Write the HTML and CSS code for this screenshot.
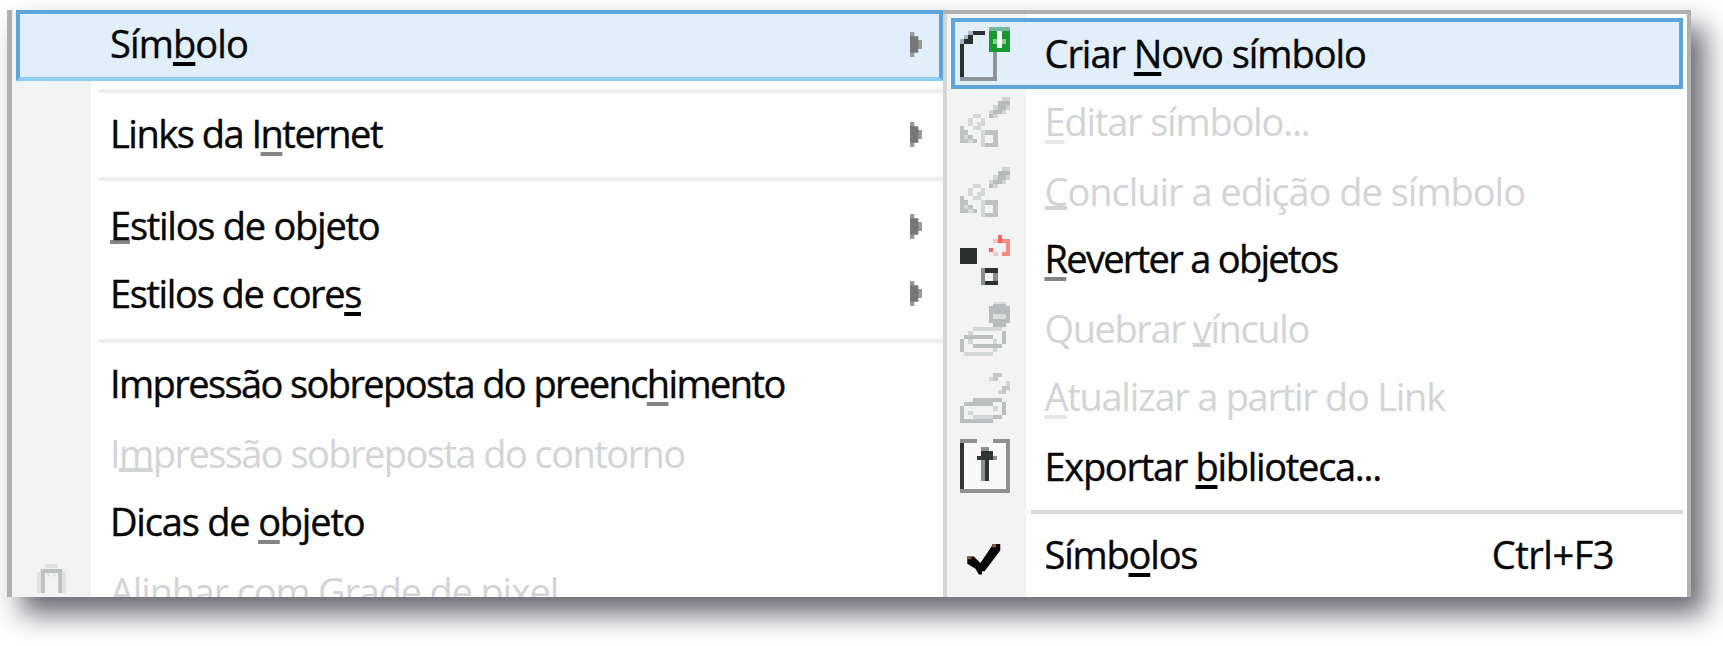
FILE: index.html
```html
<!DOCTYPE html>
<html lang="pt-BR">
<head>
<meta charset="utf-8">
<title>Menu Objeto</title>
<link rel="stylesheet" href="styles.css">
</head>
<body>
<svg width="0" height="0" class="defs">
  <symbol id="arrow" viewBox="0 0 3 6"><path d="M0 0H1V1H2V2H3V4H2V5H1V6H0Z" fill="#777"/><path d="M0 0H1V1H0ZM0 5H1V6H0ZM2 2H3V4H2Z" fill="#999"/></symbol>
  <symbol id="edit" viewBox="0 0 12 12">
    <path d="M10 1H12V2H11V3H10V4H8V3H8V2H9V1H10ZM7 4H8V5H7Z" fill="#b8bbbb"/>
    <path d="M10 0H12V1H10ZM11 2H12V3H11ZM10 3H11V4H10ZM8 2H9V3H8ZM7 3H8V4H7ZM8 4H9V5H8Z" fill="#d2d4d4"/>
    <path d="M3 4H5V5H3ZM2 5H3V7H2ZM5 5H6V7H5ZM3 7H5V8H3ZM4 6H5V7H4ZM1 9H2V10H1ZM2 10H3V11H2ZM5 8H6V12H5Z" fill="#d5d8d8"/>
    <path d="M0 7H1V11H0ZM1 8H2V9H1ZM2 9H3V10H2ZM3 10H4V11H3ZM1 10H2V11H1ZM6 8H9V12H6V11H8V9H6Z" fill="#bfc2c2"/>
  </symbol>
</svg>
<main class="frame">
  <section class="menu main-menu">
    <div class="item active r1"><span class="t s1">Sím<u class="k">b</u>olo</span><svg class="sub"><use href="#arrow"/></svg></div>
    <hr class="sep sep1">
    <div class="item r2"><span class="t s2">Links da I<u>n</u>ternet</span><svg class="sub"><use href="#arrow"/></svg></div>
    <hr class="sep sep2">
    <div class="item r3"><span class="t s3"><u class="near">E</u>stilos de objeto</span><svg class="sub"><use href="#arrow"/></svg></div>
    <div class="item r4"><span class="t s4">Estilos de core<u class="k">s</u></span><svg class="sub"><use href="#arrow"/></svg></div>
    <hr class="sep sep3">
    <div class="item r5"><span class="t s5">Impressão sobreposta do preenc<u>h</u>imento</span></div>
    <div class="item off r6"><span class="t s6">I<u class="near">m</u>pressão sobreposta do contorno</span></div>
    <div class="item r7"><span class="t s7">Dicas de <u>o</u>bjeto</span></div>
    <div class="item off r8">
      <svg class="magnet" viewBox="0 0 7 7"><path d="M1.400 7V1.700H5.600V7" fill="none" stroke="#bdc0c0" stroke-width="1"/><path d="M2 0H5V1H2ZM0 2H1V7H0ZM6 2H7V7H6ZM2.500 2.200H3V3H2.500ZM4 2.200H4.500V3H4Z" fill="#dfe1e1"/></svg>
      <span class="t s8"><u class="near">A</u>linhar com Grade de pixel</span>
    </div>
  </section>
  <section class="menu sub-menu">
    <div class="item active q1">
      <svg class="ico h13" viewBox="0 0 12 13"><path d="M3 1H6V2H3ZM2 2H3V3H2ZM1 3H3V4H1ZM0 4H1V12H0Z" fill="#2b312f"/><path d="M2 1H3V2H2ZM1 2H2V3H1ZM0 3H1V4H0Z" fill="#a9b5bc"/><path d="M0 12H8V6H9V13H0Z" fill="#8c9399"/><path d="M7 0H12V1H7Z" fill="#70b896"/><path d="M7 1H12V6H7Z" fill="#179a2d"/><path d="M9 1H10V5H9Z" fill="#fff"/><path d="M8 3H9V4H8ZM10 3H11V4H10Z" fill="#8acb96"/></svg>
      <span class="t p1">Criar <u class="k">N</u>ovo símbolo</span>
    </div>
    <div class="item off q2"><svg class="ico h12"><use href="#edit"/></svg><span class="t p2"><u class="low">E</u>ditar símbolo...</span></div>
    <div class="item off q3"><svg class="ico h12"><use href="#edit"/></svg><span class="t p3"><u class="near">C</u>oncluir a edição de símbolo</span></div>
    <div class="item q4">
      <svg class="ico h12" viewBox="0 0 12 12"><path d="M0 3H4V7H0Z" fill="#2b312f"/><path d="M6 8H9V9H6ZM6 11H9V12H6Z" fill="#2b312f"/><path d="M5 8H6V12H5ZM8 9H9V11H8Z" fill="#8b8e8e"/><path d="M9 0H10V2H9ZM7 3H8V4H7Z" fill="#f2655b"/><path d="M10 1H12V5H10V4H11V2H10Z" fill="#f58a83"/><path d="M8 1H9V2H8ZM8 4H9V5H8Z" fill="#f9c3bf"/></svg>
      <span class="t p4"><u>R</u>everter a objetos</span>
    </div>
    <div class="item off q5">
      <svg class="ico h13" viewBox="0 0 12 13"><path d="M8 0H11V1H12V5H11V6H8V5H7V1H8Z" fill="#b9bcbc"/><path d="M8 3H11V4H8ZM8 0H11V.5H8Z" fill="#dcdede"/><path d="M3 6H10V7H3ZM2 7H3V8H2ZM2 9H3V10H2ZM8 9H9V10H8ZM1 12H8V13H1ZM8 11H9V12H8Z" fill="#d4d7d7"/><path d="M1 8H8V9H1ZM0 9H1V12H0ZM3 10H10V11H3ZM10 7H11V10H10Z" fill="#bcbfbf"/></svg>
      <span class="t p5">Quebrar <u class="near">v</u>ínculo</span>
    </div>
    <div class="item off q6">
      <svg class="ico h12" viewBox="0 0 12 12"><path d="M8 0H10V1H9V2H8ZM10 3H12V4H11V5H10Z" fill="#c5c8c8"/><path d="M7 1H8V2H7ZM11 2H12V3H11ZM9 4H10V5H9ZM2 9H3V10H2ZM3 10H9V11H3ZM8 8H9V9H8ZM2 7H3V8H2Z" fill="#d4d7d7"/><path d="M3 6H10V7H3ZM1 7H8V8H1ZM0 8H1V11H0ZM0 11H8V12H0ZM10 7H11V10H10ZM8 10H10V11H8Z" fill="#bcbfbf"/></svg>
      <span class="t p6"><u class="low">A</u>tualizar a partir do Link</span>
    </div>
    <div class="item q7">
      <svg class="ico h13" viewBox="0 0 12 13"><path d="M1 1H11V12H1Z" fill="#f9f9f9"/><path d="M0 0H4V1H0ZM8 0H12V13H0V12H11V1H8Z" fill="#909292"/><path d="M0 1H1V12H0ZM5 3H8V4H8V5H7V10H6V5H4V4H5Z" fill="#2f3533"/><path d="M5 5H6V10H5ZM5 2H7V3H5ZM8 4H9V5H8Z" fill="#8c8f8f"/></svg>
      <span class="t p7">Exportar <u class="k">b</u>iblioteca...</span>
    </div>
    <hr class="sep sep4">
    <div class="item q8">
      <svg class="check" viewBox="0 0 10 8"><path d="M1 3H2.600L4.200 4.600L7 .4V0H9V1.600L5.200 6.600H4.600V7.400H3.800L3 6L1 4.800Z" fill="#080808"/><path d="M1 3H2V3.700H1ZM7 0H8V.8H7Z" fill="#8c5a3a"/></svg>
      <span class="t p8">Símb<u class="k">o</u>los</span><span class="key">Ctrl+F3</span>
    </div>
  </section>
</main>
</body>
</html>
```
FILE: styles.css
```css
* { box-sizing: border-box; }
body {
  margin: 0;
  height: 646px;
  overflow: hidden;
  padding: 10px 0 0 7px;
  background: #fff;
  color: #080808;
  font: 38px/1 "Open Sans", "Noto Sans", sans-serif;
}
.defs { position: absolute; }
.frame {
  display: flex;
  width: 1684px;
  height: 587px;
  box-shadow: 14px 17px 26px rgba(36, 32, 44, .68);
  background: #fff;
}
.menu {
  display: flex;
  flex-direction: column;
  height: 587px;
  overflow: hidden;
}
.main-menu {
  width: 936px;
  border-left: 5px solid #b0b0b0;
  background: linear-gradient(90deg, #f3f3f3 79px, #fefefe 79px);
}
.sub-menu {
  width: 748px;
  border: solid #b0b1b1;
  border-width: 4px 4px 0 0;
  background: linear-gradient(90deg, #d4d6d6 4px, #f3f3f3 4px, #f3f3f3 83px, #fefefe 83px);
}
.item {
  display: flex;
  flex: none;
  align-items: center;
  position: relative;
  padding-top: 2px;
  -webkit-text-stroke: .4px;
}
.main-menu .item { padding-left: 98px; }
.sub-menu .item { padding-left: 12px; }
.t { white-space: pre; line-height: 60px; }
.sub-menu .t { margin-left: 35px; }
.sub-menu .off, .main-menu .off { color: #d4d4d7; -webkit-text-stroke: 0; }
.main-menu .active {
  margin-left: 4px;
  padding: 0 0 6px 90px;
  border: 4px solid #5ba5da;
  border-bottom-color: #8dcdf1;
  background: #e2effa;
}
.sub-menu .active {
  margin: 4px 4px 0 8px;
  padding: 0 0 2px 5px;
  border: 4px solid #5ba5da;
  background: #e2effa;
}
u {
  text-decoration: underline 4px #858585;
  text-underline-offset: 4px;
  text-decoration-skip-ink: none;
}
.near { text-underline-offset: 0; }
.k { text-decoration-color: #000; }
.off u { text-decoration-color: #d2d3d3; }
.off .low { text-decoration-color: #e8e8e8; }
.sep { flex: none; height: 4px; margin: 0 0 0 87px; border: 0; background: #eee; }

.r1 { height: 71px; }
.sep1 { margin-top: 8px; }
.main-menu .r2 { height: 79px; padding-top: 0; }
.sep2 { margin-top: 5px; }
.r3 { height: 67px; margin-top: 9px; }
.main-menu .r4 { height: 66px; padding-top: 5px; }
.sep3 { margin-top: 16px; }
.r5 { height: 68px; margin-top: 5px; }
.r6 { height: 72px; }
.r7 { height: 63px; }
.r8 { height: 77px; }

.q1 { height: 71px; }
.q2 { height: 61px; }
.q3 { height: 71px; margin-top: 5px; }
.q4 { height: 61px; }
.q5 { height: 67px; margin-top: 7px; }
.q6 { height: 67px; }
.q7 { height: 67px; margin-top: 3px; }
.sep4 { margin: 12px 4px 0 88px; background: #d6d9d9; }
.q8 { height: 67px; margin-top: 5px; }
.sub-menu .q3, .sub-menu .q5 { padding-top: 0; }

.sub { width: 12.5px; height: 25px; margin: 4px 21px 0 auto; }
.r4 .sub { margin-top: 2px; }
.main-menu .active .sub { margin-right: 17px; }
.ico { flex: none; width: 50px; margin-left: 4.5px; shape-rendering: crispEdges; }
.h12 { height: 50px; }
.h13 { height: 54px; }
.q1 .ico { margin: 2px 0 0 -.5px; }
.q2 .ico { margin-top: 2px; }
.q3 .ico { margin-top: 2px; }
.q4 .ico, .q6 .ico { margin-top: 4px; }
.q5 .ico { margin-top: 2px; }
.magnet { width: 29px; height: 29px; margin: -24px 45px 0 -73px; }
.r8 .t { margin-left: -1px; }
.check { width: 41.5px; height: 33px; margin: 14px 5px 0 8px; }
.key { margin-left: auto; margin-right: 73px; letter-spacing: -.5px; }

.s1 { letter-spacing: -.9px; }
.s2 { letter-spacing: -1.5px; }
.s3 { letter-spacing: -1.25px; }
.s4 { letter-spacing: -1.4px; }
.s5 { letter-spacing: -1.6px; }
.s6 { letter-spacing: -1.55px; }
.s7 { letter-spacing: -1.2px; }
.s8 { letter-spacing: -1.2px; }
.p1 { letter-spacing: -1.05px; }
.p2 { letter-spacing: -1.2px; }
.p3 { letter-spacing: -1.03px; }
.p4 { letter-spacing: -1.7px; }
.p5 { letter-spacing: -1.4px; }
.p6 { letter-spacing: -1.28px; }
.p7 { letter-spacing: -1.3px; }
.p8 { letter-spacing: -1.2px; }
```
